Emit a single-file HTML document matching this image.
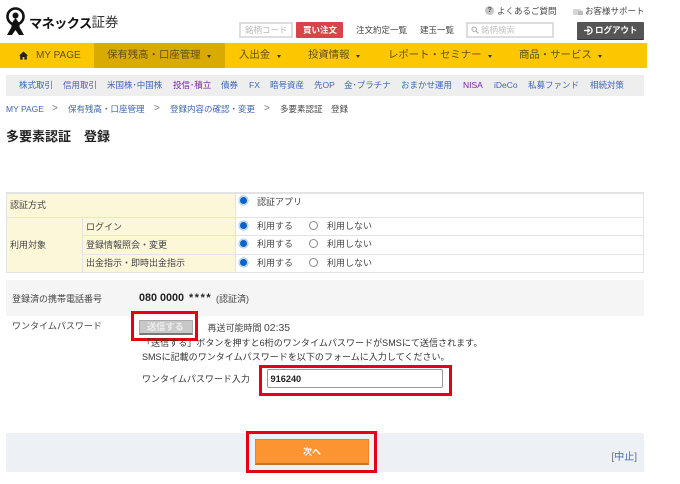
<!DOCTYPE html>
<html lang="ja"><head><meta charset="utf-8"><title>多要素認証 登録</title>
<style>
html,body{margin:0;padding:0;background:#fff}
body{position:relative;width:680px;height:484px;overflow:hidden;font-family:"Liberation Sans","Noto Sans CJK JP",sans-serif;font-size:9px;color:#444}
.a{position:absolute;white-space:nowrap;line-height:12px}
.h{font-size:8.5px}
.b{position:absolute;box-sizing:border-box}
.n{font-size:10.4px;color:#5e5010;line-height:14px;top:49px}
.s{top:79px;color:#3f66b8;font-size:8.5px}
.p{color:#7a1fb0}
.c{color:#3f66b8;top:102.5px;font-size:8.5px}
.g{top:103px;color:#777;font-size:10px}
.on,.off{position:absolute;width:9px;height:9px;border-radius:50%;box-sizing:border-box}
.on{background:#0a63c9;border:1.5px solid #cfe0f2;box-shadow:0 0 0 .5px #8fb8e4}
.off{border:1px solid #8a8a8a;background:#fff}
.tri{position:absolute;width:0;height:0;border-left:2.5px solid transparent;border-right:2.5px solid transparent;border-top:3.5px solid #333;top:55px}
.red{position:absolute;box-sizing:border-box;border:3px solid #e60012}
.l{position:absolute;background:#e3e3e3}
</style></head><body>
<svg class="b" style="left:5px;top:6px" width="21" height="30" viewBox="0 0 21 30"><circle cx="10.5" cy="10.5" r="8" fill="none" stroke="#111" stroke-width="2.6"/><circle cx="10.5" cy="9.5" r="3" fill="#111"/><path d="M10.5 12L6.5 17.5L6.5 21L2 29L7 29L10.5 24L14 29L19 29L14.5 21L14.5 17.5Z" fill="#111"/></svg>
<span class="a" style="left:29px;top:16px;font-size:13.2px;font-weight:bold;color:#111;line-height:16px;letter-spacing:-.6px">マネックス</span>
<span class="a" style="left:91.5px;top:15px;font-size:13.5px;color:#333;line-height:16px">証券</span>

<div class="b" style="left:239px;top:22px;width:54px;height:16px;border:2px solid #ddd;background:#fff"></div>
<span class="a h" style="left:245px;top:24px;color:#bbb">銘柄コード</span>
<div class="b" style="left:296px;top:22px;width:47px;height:16px;background:#d9434a;border-radius:1px"></div>
<span class="a h" style="left:303px;top:24px;color:#fff;font-weight:bold">買い注文</span>
<span class="a h" style="left:356px;top:24px;color:#444">注文約定一覧</span>
<span class="a h" style="left:420px;top:24px;color:#444">建玉一覧</span>
<div class="b" style="left:466px;top:22px;width:88px;height:16px;border:2px solid #ddd;background:#fff"></div>
<svg class="b" style="left:471px;top:26px" width="8" height="8" viewBox="0 0 8 8"><circle cx="3.2" cy="3.2" r="2.2" fill="none" stroke="#aaa"/><path d="M5 5L7.5 7.5" stroke="#aaa"/></svg>
<span class="a h" style="left:481px;top:24px;color:#c4c4c4">銘柄検索</span>
<div class="b" style="left:577px;top:22px;width:67px;height:17px;background:#555;border-radius:1px;box-shadow:0 1px 0 #333"></div>
<svg class="b" style="left:584px;top:26px" width="9" height="9" viewBox="0 0 9 9"><path d="M3 1.2A3.6 3.6 0 1 1 3 7.8" fill="none" stroke="#fff" stroke-width="1.3"/><path d="M0 4.5H5M3.4 2.6L5.5 4.5L3.4 6.4" fill="none" stroke="#fff" stroke-width="1.3"/></svg>
<span class="a h" style="left:595px;top:24px;color:#fff;font-weight:bold">ログアウト</span>

<div class="b" style="left:485px;top:6px;width:9px;height:9px;border-radius:50%;background:#c4c4c4"></div>
<span class="a" style="left:487.5px;top:5px;font-size:7px;color:#555;font-weight:bold">?</span>
<span class="a h" style="left:497px;top:5px;color:#444">よくあるご質問</span>
<div class="b" style="left:573px;top:9px;width:8px;height:6px;background:#d5d5d5;border-radius:1px"></div>
<div class="b" style="left:578px;top:11px;width:5px;height:4px;background:#bbb"></div>
<span class="a h" style="left:585px;top:5px;color:#444">お客様サポート</span>

<div class="b" style="left:0;top:43px;width:647px;height:25px;background:#fdc700"></div>
<div class="b" style="left:94px;top:43px;width:131px;height:25px;background:#d9aa00"></div>
<svg class="b" style="left:19px;top:51px" width="9" height="9" viewBox="0 0 9 9"><path d="M4.5 .5L9 4.6H7.8V8.6H5.4V6H3.6V8.6H1.2V4.6H0Z" fill="#222"/></svg>
<span class="a n" style="left:36px;font-size:10px">MY PAGE</span>
<span class="a n" style="left:107px">保有残高・口座管理</span><i class="tri" style="left:207px"></i>
<span class="a n" style="left:239px">入出金</span><i class="tri" style="left:277px"></i>
<span class="a n" style="left:308px">投資情報</span><i class="tri" style="left:356px"></i>
<span class="a n" style="left:388px">レポート・セミナー</span><i class="tri" style="left:488px"></i>
<span class="a n" style="left:519px">商品・サービス</span><i class="tri" style="left:598px"></i>

<div class="b" style="left:6px;top:75px;width:638px;height:21px;background:#eee"></div>
<span class="a s" style="left:19px">株式取引</span>
<span class="a s" style="left:63px">信用取引</span>
<span class="a s" style="left:107px">米国株･中国株</span>
<span class="a s p" style="left:173px">投信･積立</span>
<span class="a s" style="left:221px">債券</span>
<span class="a s" style="left:249px">FX</span>
<span class="a s" style="left:270px">暗号資産</span>
<span class="a s" style="left:314px">先OP</span>
<span class="a s" style="left:344px">金･プラチナ</span>
<span class="a s" style="left:401px">おまかせ運用</span>
<span class="a s p" style="left:463px">NISA</span>
<span class="a s" style="left:494px">iDeCo</span>
<span class="a s" style="left:528px">私募ファンド</span>
<span class="a s" style="left:590px">相続対策</span>

<span class="a c" style="left:6px">MY PAGE</span>
<span class="a g" style="left:52px">&gt;</span>
<span class="a c" style="left:68px">保有残高・口座管理</span>
<span class="a g" style="left:154px">&gt;</span>
<span class="a c" style="left:170px">登録内容の確認・変更</span>
<span class="a g" style="left:264px">&gt;</span>
<span class="a" style="left:280px;top:102.5px;color:#444;font-size:8.5px">多要素認証　登録</span>

<span class="a" style="left:6px;top:130px;font-size:13px;font-weight:bold;color:#222;line-height:14px">多要素認証　登録</span>

<div class="b" style="left:7px;top:194px;width:228px;height:78px;background:#fdf7d9"></div>
<div class="l" style="left:6px;top:192px;width:638px;height:2px"></div>
<div class="l" style="left:6px;top:272px;width:638px;height:1px"></div>
<div class="l" style="left:6px;top:192px;width:1px;height:81px"></div>
<div class="l" style="left:643px;top:192px;width:1px;height:81px"></div>
<div class="l" style="left:6px;top:217px;width:638px;height:1px"></div>
<div class="l" style="left:82px;top:235px;width:562px;height:1px"></div>
<div class="l" style="left:82px;top:254px;width:562px;height:1px"></div>
<div class="l" style="left:82px;top:218px;width:1px;height:54px"></div>
<div class="l" style="left:235px;top:194px;width:1px;height:78px"></div>
<span class="a" style="left:10px;top:199px">認証方式</span>
<span class="a" style="left:10px;top:239px">利用対象</span>
<span class="a" style="left:86px;top:221px">ログイン</span>
<span class="a" style="left:86px;top:239px">登録情報照会・変更</span>
<span class="a" style="left:86px;top:257px">出金指示・即時出金指示</span>
<i class="on" style="left:239px;top:196px"></i><span class="a" style="left:257px;top:196px">認証アプリ</span>
<i class="on" style="left:239px;top:221px"></i><span class="a" style="left:257px;top:220px">利用する</span><i class="off" style="left:309px;top:221px"></i><span class="a" style="left:327px;top:220px">利用しない</span>
<i class="on" style="left:239px;top:239px"></i><span class="a" style="left:257px;top:238px">利用する</span><i class="off" style="left:309px;top:239px"></i><span class="a" style="left:327px;top:238px">利用しない</span>
<i class="on" style="left:239px;top:258px"></i><span class="a" style="left:257px;top:257px">利用する</span><i class="off" style="left:309px;top:258px"></i><span class="a" style="left:327px;top:257px">利用しない</span>

<div class="b" style="left:6px;top:280px;width:638px;height:36px;background:#f5f5f5"></div>
<span class="a" style="left:12px;top:293px">登録済の携帯電話番号</span>
<span class="a" style="left:139px;top:292px;font-weight:bold;color:#222;font-size:10.8px">080 0000</span>
<span class="a" style="left:189px;top:292px;font-weight:bold;color:#222;font-size:10.8px;letter-spacing:1.6px">****</span>
<span class="a" style="left:216px;top:293px">(認証済)</span>
<span class="a" style="left:12px;top:320px">ワンタイムパスワード</span>
<div class="b" style="left:139px;top:320px;width:54px;height:15px;background:#c8c8c8;border:1px solid #aaa;border-bottom:2px solid #777"></div>
<span class="a" style="left:147px;top:321px;color:#eee;font-weight:bold;font-size:9.2px">送信する</span>
<div class="red" style="left:131px;top:311px;width:67px;height:30px"></div>
<span class="a" style="left:207.5px;top:322px">再送可能時間 <span style="font-size:10.4px">02:35</span></span>
<span class="a" style="left:142px;top:337px;color:#333;letter-spacing:.05px">「送信する」ボタンを押すと6桁のワンタイムパスワードがSMSにて送信されます。</span>
<span class="a" style="left:142px;top:351px;color:#333;letter-spacing:.03px">SMSに記載のワンタイムパスワードを以下のフォームに入力してください。</span>
<span class="a" style="left:142px;top:373px;color:#333">ワンタイムパスワード入力</span>
<div class="b" style="left:267px;top:369px;width:176px;height:19px;border:1px solid #999;border-radius:2px;background:#fff"></div>
<span class="a" style="left:270.5px;top:373px;color:#222;font-size:9.2px;font-weight:bold">916240</span>
<div class="red" style="left:259px;top:365px;width:193px;height:31px"></div>

<div class="b" style="left:6px;top:433px;width:638px;height:39px;background:#edf1f6;border-radius:2px"></div>
<div class="b" style="left:255px;top:439px;width:114px;height:26px;background:#fd9432;border:1px solid #e8862a;border-bottom:2px solid #c4742a"></div>
<span class="a" style="left:303px;top:446px;color:#fff;font-weight:bold">次へ</span>
<div class="red" style="left:246px;top:431px;width:131px;height:42px"></div>
<span class="a" style="left:611.5px;top:452px;color:#3f66b8;font-size:10px"><span style="color:#667">[</span>中止<span style="color:#667">]</span></span>
</body></html>
